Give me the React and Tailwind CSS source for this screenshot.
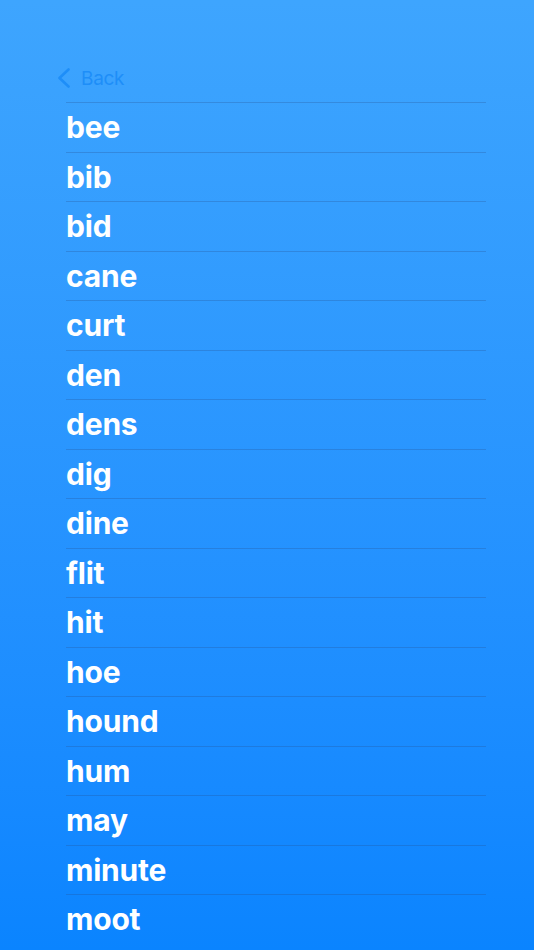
import React from "react";

const words = ["bee","bib","bid","cane","curt","den","dens","dig","dine","flit","hit","hoe","hound","hum","may","minute","moot"];

export default function App() {
  return (
    <div className="w-[534px] h-[950px] overflow-hidden bg-gradient-to-b from-[#3ea5fe] to-[#0a84ff]" style={{ fontFamily: "Inter, 'Liberation Sans', sans-serif" }}>
      <div className="ml-[48px] w-[438px] pt-[54px]">
        <div className="h-[48px] flex items-center pl-[9px]">
          <svg width="14" height="20" viewBox="0 0 14 20" className="mr-[10px]">
            <path d="M11.5 1.5 L2.5 10 L11.5 18.5" fill="none" stroke="#1e8ef8" strokeWidth="2.6" strokeLinecap="round" strokeLinejoin="round" />
          </svg>
          <span className="text-[19px] text-[#1e8ef8] leading-none tracking-[-0.3px]">Back</span>
        </div>
        <div className="pl-[18px]">
          {words.map((w) => (
            <div key={w} className="h-[49.5px] border-t border-[rgba(40,80,140,0.28)] flex items-center">
              <span className="text-[30px] font-bold text-white leading-none tracking-[-0.2px]">{w}</span>
            </div>
          ))}
        </div>
      </div>
    </div>
  );
}
